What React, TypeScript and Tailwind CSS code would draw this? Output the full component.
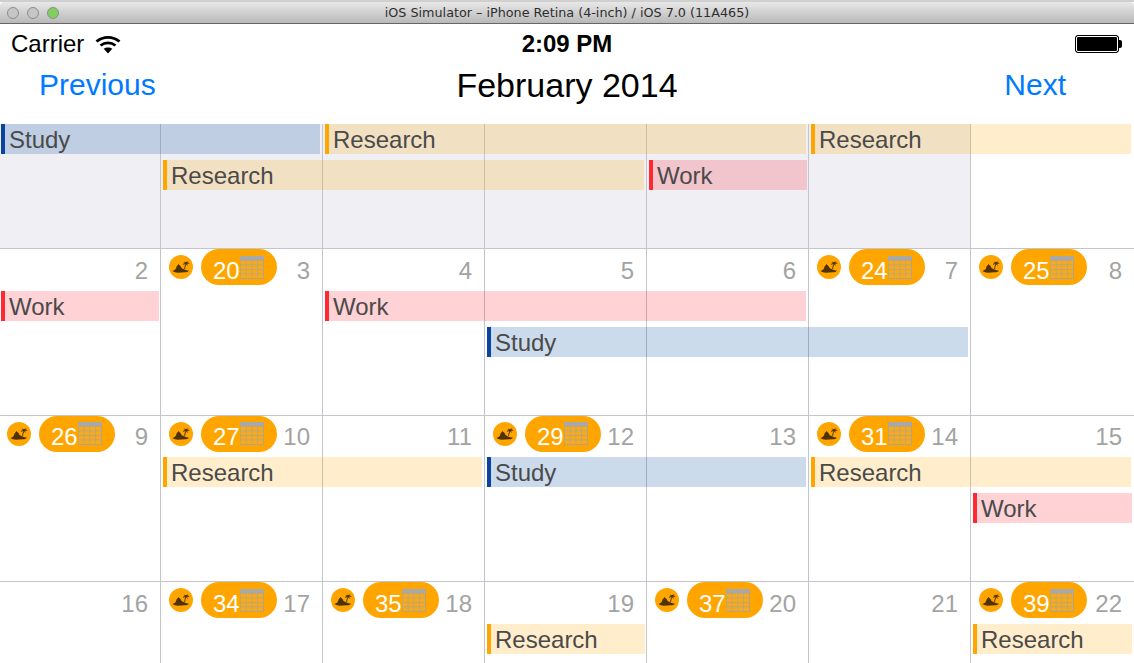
const sans = "font-['Liberation_Sans',Arial,sans-serif]";

type Day = { num: number; pill?: number };
type Event = { label: string; kind: "study" | "research" | "work"; place: string };
type Week = { rows: string; days: Day[]; events: Event[]; shaded?: boolean; tight?: boolean };

const cellCols = [
  "col-start-1",
  "col-start-2",
  "col-start-3",
  "col-start-4",
  "col-start-5",
  "col-start-6",
  "col-start-7",
];

const weeks: Week[] = [
  {
    rows: "grid-rows-[36px_36px_1fr] h-[125px]",
    shaded: true,
    days: [],
    events: [
      { label: "Study", kind: "study", place: "col-start-1 col-span-2 row-start-1" },
      { label: "Research", kind: "research", place: "col-start-3 col-span-3 row-start-1" },
      { label: "Research", kind: "research", place: "col-start-6 col-span-2 row-start-1" },
      { label: "Research", kind: "research", place: "col-start-2 col-span-3 row-start-2" },
      { label: "Work", kind: "work", place: "col-start-5 col-span-1 row-start-2" },
    ],
  },
  {
    rows: "grid-rows-[42px_36px_36px_1fr] h-[167px]",
    days: [{ num: 2 }, { num: 3, pill: 20 }, { num: 4 }, { num: 5 }, { num: 6 }, { num: 7, pill: 24 }, { num: 8, pill: 25 }],
    events: [
      { label: "Work", kind: "work", place: "col-start-1 col-span-1 row-start-2" },
      { label: "Work", kind: "work", place: "col-start-3 col-span-3 row-start-2" },
      { label: "Study", kind: "study", place: "col-start-4 col-span-3 row-start-3" },
    ],
  },
  {
    rows: "grid-rows-[41px_36px_36px_1fr] h-[166px]",
    tight: true,
    days: [{ num: 9, pill: 26 }, { num: 10, pill: 27 }, { num: 11 }, { num: 12, pill: 29 }, { num: 13 }, { num: 14, pill: 31 }, { num: 15 }],
    events: [
      { label: "Research", kind: "research", place: "col-start-2 col-span-2 row-start-2" },
      { label: "Study", kind: "study", place: "col-start-4 col-span-2 row-start-2" },
      { label: "Research", kind: "research", place: "col-start-6 col-span-2 row-start-2" },
      { label: "Work", kind: "work", place: "col-start-7 col-span-1 row-start-3" },
    ],
  },
  {
    rows: "grid-rows-[42px_36px_1fr] h-[82px]",
    days: [{ num: 16 }, { num: 17, pill: 34 }, { num: 18, pill: 35 }, { num: 19 }, { num: 20, pill: 37 }, { num: 21 }, { num: 22, pill: 39 }],
    events: [
      { label: "Research", kind: "research", place: "col-start-4 col-span-1 row-start-2" },
      { label: "Research", kind: "research", place: "col-start-7 col-span-1 row-start-2" },
    ],
  },
];

const kindClass = {
  study: "bg-[#004a9f]/20 border-[#0a449e]",
  research: "bg-[#ffa500]/20 border-[#ffa500]",
  work: "bg-[#ff2030]/20 border-[#ff2832]",
};

const IslandIcon = () => (
  <div className="ml-[8px] mt-[6px] h-[24px] w-[24px] shrink-0 rounded-full bg-[#ffa500]">
    <svg width="24" height="24" viewBox="0 0 24 24" fill="#4f3203">
      {/* island */}
      <path d="M3.500 16c1.600-.4 2.800-1.300 3.500-2.500.3-1.700 1-2.900 2-3.400l.6-1.300.6 1.300c1.200.5 1.900 1.600 2.300 3 1.700 1.200 4 2.200 7.500 2.600-1 1.100-2.500 1.500-4.200 1.500-2.400 0-4.600.5-7 .5-2 0-3.700-.4-5.300-1.700z" />
      {/* palm trunk and fronds */}
      <path d="M15.200 14c.1-1.900.5-3.500 1.300-4.900l.7.3c-.7 1.400-1.100 2.900-1.100 4.700z" />
      <path d="M17 9.300c-1.200-.4-2.300-.1-3.100.8.100-1.300 1.100-2.200 2.300-2.200-.6-.6-1.300-.8-2-.6.800-.8 2-.8 2.800 0 .6-.8 1.600-1.100 2.500-.8-.6.200-1 .6-1.200 1.100 1.100-.1 2 .5 2.300 1.500-.9-.5-1.800-.6-2.600-.3.500.6.700 1.300.5 2.100-.4-.7-1-1.300-1.500-1.600z" />
    </svg>
  </div>
);

const CalendarIcon = ({ tight }: { tight?: boolean }) => (
  <svg
    width="24"
    height="23"
    viewBox="0 0 24 23"
    className={`shrink-0 self-start ${tight ? "mt-[6px]" : "mt-[7px]"}`}
  >
    <rect x="0" y="0" width="24" height="23" fill="#b3a488" />
    <rect x="0" y="0" width="24" height="4" fill="#a8a8a8" />
    {[0, 1, 2, 3].map((c) =>
      [0, 1, 2, 3].map((r) => (
        <rect key={`${c}-${r}`} x={0.75 + c * 5.75} y={4.75 + r * 4.5} width="5" height="3.750" fill="#f8aa1a" />
      )),
    )}
  </svg>
);

const DayHeader = ({ day, tight }: { day: Day; tight?: boolean }) => (
  <div className="flex items-start">
    {day.pill && (
      <>
        <IslandIcon />
        <div className="ml-[8px] flex h-[36px] w-[76px] shrink-0 items-center rounded-full bg-[#ffa500] pl-[12px] text-[24px] text-white">
          <span className={tight ? "pt-[6px]" : "pt-[8px]"}>{day.pill}</span>
          <CalendarIcon tight={tight} />
        </div>
      </>
    )}
    <span className={`ml-auto mr-[12px] text-[24px] leading-[28px] text-[#a3a3a3] ${tight ? "mt-[7px]" : "mt-[8px]"}`}>
      {day.num}
    </span>
  </div>
);

const WeekRow = ({ week }: { week: Week }) => (
  <div className={`grid w-[1135px] grid-cols-[repeat(6,162px)_163px] border-b border-[#c4c4cc] ${week.rows}`}>
    {cellCols.map((col, i) => (
      <div
        key={col}
        className={`${col} row-span-full ${i < 6 ? "border-r border-[#c4c4cc]" : ""} ${
          week.shaded && i < 6 ? "bg-[#efeff4]" : "bg-white"
        }`}
      >
        {week.days[i] && <DayHeader day={week.days[i]} tight={week.tight} />}
      </div>
    ))}
    {week.events.map((ev, i) => (
      <div
        key={i}
        className={`${ev.place} ml-[2px] ${ev.place.includes("col-span-1") ? "mr-[2px]" : "mr-[3px]"} flex h-[30px] items-center border-l-[4px] pl-[4px] pt-[2px] text-[24px] text-[#4a4a4a] ${kindClass[ev.kind]}`}
      >
        {ev.label}
      </div>
    ))}
  </div>
);

const Wifi = () => (
  <svg width="26" height="19" viewBox="0 0 26 19" fill="none" stroke="#000" strokeWidth="2.800">
    <path d="M1.500 6.500c6.500-5.600 16.500-5.600 23 0" />
    <path d="M5.500 10.500c4.400-3.500 10.600-3.500 15 0" />
    <path d="M13 18.500l-4.300-4.700c2.500-1.800 6.100-1.800 8.600 0z" fill="#000" stroke="none" />
  </svg>
);

const Light = ({ color }: { color: string }) => (
  <div className={`h-[12px] w-[12px] rounded-full border border-[#8c8c8c] ${color}`} />
);

export default function App() {
  return (
    <div className={`h-[663px] w-[1134px] overflow-hidden bg-white ${sans}`}>
      {/* Simulator window chrome */}
      <div className="h-[2px] bg-[#cfcfcf]" />
      <div className="relative flex h-[22px] items-center justify-center rounded-t-[4px] border-b border-[#666666] bg-gradient-to-b from-[#e8e8e8] to-[#b9b9b9]">
        <div className="absolute left-[7px] top-[5px] flex gap-[8px]">
          <Light color="bg-[#c6c6c6]" />
          <Light color="bg-[#c6c6c6]" />
          <Light color="border-[#5d9a45] bg-[#80d060]" />
        </div>
        <span className="font-['DejaVu_Sans',sans-serif] text-[12.750px] text-[#2e2e2e]">
          iOS Simulator – iPhone Retina (4-inch) / iOS 7.0 (11A465)
        </span>
      </div>

      {/* Status bar */}
      <div className="flex h-[40px] items-center justify-between text-[24px] text-black">
        <div className="flex w-[240px] items-center gap-[11px] pl-[11px]">
          <span>Carrier</span>
          <Wifi />
        </div>
        <span className="font-bold">2:09 PM</span>
        <div className="flex w-[240px] items-center justify-end pr-[12px]">
          <div className="h-[18px] w-[44px] rounded-[3px] border border-black bg-black outline outline-1 -outline-offset-2 outline-white" />
          <div className="h-[8px] w-[3px] rounded-r-[2px] bg-black" />
        </div>
      </div>

      {/* Month navigation */}
      <div className="flex h-[60px] items-start justify-between text-[#007aff]">
        <span className="w-[240px] pl-[39px] text-[30px] leading-[42px]">Previous</span>
        <span className="text-[34px] leading-[42px] text-black">February 2014</span>
        <span className="w-[240px] pr-[68px] text-right text-[30px] leading-[42px]">Next</span>
      </div>

      <div className="-ml-px">
        {weeks.map((week, i) => (
          <WeekRow key={i} week={week} />
        ))}
      </div>
    </div>
  );
}
